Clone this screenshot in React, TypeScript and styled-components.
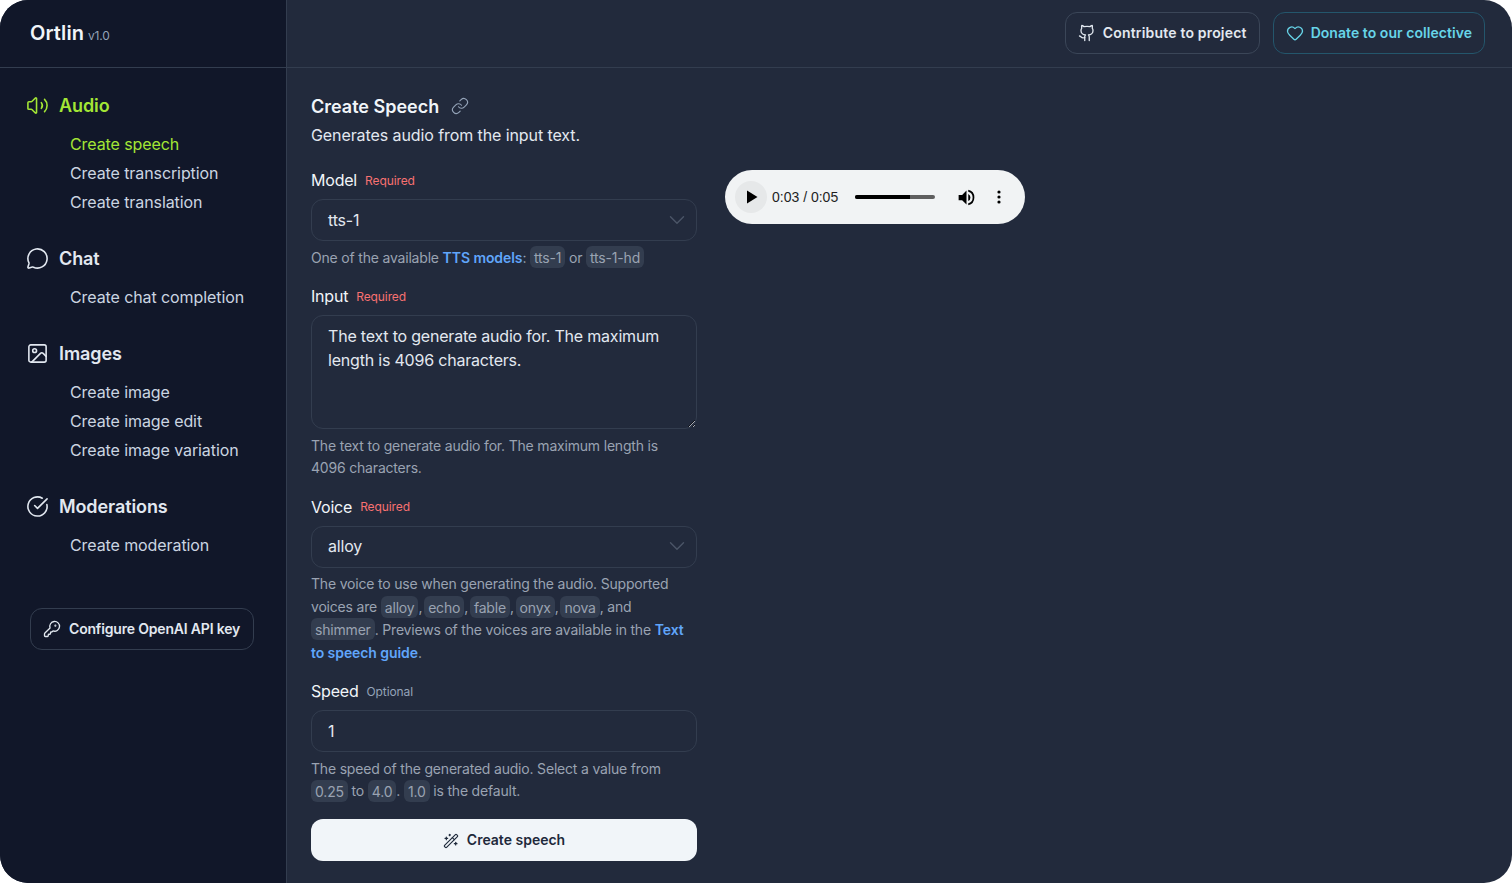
import { FC, ReactNode } from 'react';
import styled, { createGlobalStyle } from 'styled-components';
import {
  ChevronDown,
  CircleCheckBig,
  Github,
  Heart,
  Image,
  KeyRound,
  Link as LinkIcon,
  MessageCircle,
  Volume2,
  WandSparkles,
} from 'lucide-react';

const sections = [
  { name: 'Audio', icon: Volume2, items: ['Create speech', 'Create transcription', 'Create translation'] },
  { name: 'Chat', icon: MessageCircle, items: ['Create chat completion'] },
  { name: 'Images', icon: Image, items: ['Create image', 'Create image edit', 'Create image variation'] },
  { name: 'Moderations', icon: CircleCheckBig, items: ['Create moderation'] },
];

const Field: FC<{ label: string; tag: string; optional?: boolean; children: ReactNode }> = ({
  label,
  tag,
  optional,
  children,
}) => (
  <FieldWrap>
    <LabelRow>
      <Label>{label}</Label>
      <Tag $optional={optional}>{tag}</Tag>
    </LabelRow>
    {children}
  </FieldWrap>
);

export default function App() {
  return (
    <>
      <GlobalStyle />
      <Shell>
        <Sidebar>
          <Brand>
            <Logo>Ortlin</Logo>
            <Version>v1.0</Version>
          </Brand>
          <Nav>
            {sections.map((section) => (
              <Section key={section.name}>
                <SectionHead $active={section.name === 'Audio'}>
                  <SectionIcon>
                    <section.icon size={25} strokeWidth={1.65} />
                  </SectionIcon>
                  {section.name}
                </SectionHead>
                <SubList>
                  {section.items.map((item) => (
                    <SubItem key={item} $active={item === 'Create speech'}>
                      {item}
                    </SubItem>
                  ))}
                </SubList>
              </Section>
            ))}
            <KeyButton>
              <KeyRound size={18} strokeWidth={1.75} />
              Configure OpenAI API key
            </KeyButton>
          </Nav>
        </Sidebar>
        <Main>
          <TopBar>
            <OutlineButton>
              <Github size={18} strokeWidth={1.75} />
              Contribute to project
            </OutlineButton>
            <OutlineButton $accent>
              <Heart size={18} strokeWidth={1.75} />
              Donate to our collective
            </OutlineButton>
          </TopBar>
          <Content>
            <Form>
              <TitleRow>
                <Title>Create Speech</Title>
                <LinkIcon size={18} strokeWidth={1.5} />
              </TitleRow>
              <Lead>Generates audio from the input text.</Lead>
              <Field label="Model" tag="Required">
                <Control>
                  tts-1
                  <Chevron>
                    <ChevronDown size={26} strokeWidth={1.3} />
                  </Chevron>
                </Control>
                <Help>
                  One of the available <A>TTS models</A>: <Code>tts-1</Code> or <Code>tts-1-hd</Code>
                </Help>
              </Field>
              <Field label="Input" tag="Required">
                <TextArea
                  readOnly
                  value="The text to generate audio for. The maximum length is 4096 characters."
                />
                <Help>
                  The text to generate audio for. The maximum length is
                  <br />
                  4096 characters.
                </Help>
              </Field>
              <Field label="Voice" tag="Required">
                <Control>
                  alloy
                  <Chevron>
                    <ChevronDown size={26} strokeWidth={1.3} />
                  </Chevron>
                </Control>
                <Help>
                  The voice to use when generating the audio. Supported voices are <Code>alloy</Code>
                  <Sep>, </Sep>
                  <Code>echo</Code>
                  <Sep>, </Sep>
                  <Code>fable</Code>
                  <Sep>, </Sep>
                  <Code>onyx</Code>
                  <Sep>, </Sep>
                  <Code>nova</Code>, and <Code>shimmer</Code>. Previews of the voices are available in
                  the <A>Text to speech guide</A>.
                </Help>
              </Field>
              <Field label="Speed" tag="Optional" optional>
                <Control>1</Control>
                <Help>
                  The speed of the generated audio. Select a value from <Code>0.25</Code> to{' '}
                  <Code>4.0</Code>. <Code>1.0</Code> is the default.
                </Help>
              </Field>
              <Submit>
                <WandSparkles size={16} strokeWidth={1.75} />
                Create speech
              </Submit>
            </Form>
            <Player>
              <PlayCircle>
                <svg width="12" height="14" viewBox="0 0 12 14">
                  <path d="M1 0.5v13l10.5-6.5z" fill="#000" />
                </svg>
              </PlayCircle>
              <Time>0:03 / 0:05</Time>
              <Track>
                <TrackFill style={{ width: `${(55 / 80) * 100}%` }} />
              </Track>
              <PlayerIcon>
                <svg width="21" height="21" viewBox="0 0 24 24" fill="#000">
                  <path d="M3 9v6h4l5 5V4L7 9H3zm13.5 3A4.5 4.5 0 0 0 14 7.97v8.05A4.47 4.47 0 0 0 16.5 12zM14 3.23v2.06a7 7 0 0 1 0 13.42v2.06a9 9 0 0 0 0-17.54z" />
                </svg>
              </PlayerIcon>
              <PlayerDots>
                <svg width="4" height="14" viewBox="0 0 4 14" fill="#000">
                  <circle cx="2" cy="2" r="1.6" />
                  <circle cx="2" cy="7" r="1.6" />
                  <circle cx="2" cy="12" r="1.6" />
                </svg>
              </PlayerDots>
            </Player>
          </Content>
        </Main>
      </Shell>
    </>
  );
}

const GlobalStyle = createGlobalStyle`
  html, body {
    margin: 0;
    height: 100%;
    background: #fff;
    overflow: hidden;
  }
  * {
    box-sizing: border-box;
  }
`;

const Shell = styled.div`
  display: grid;
  grid-template-columns: 287px 1fr;
  width: 1512px;
  height: 883px;
  border-radius: 28px;
  overflow: hidden;
  background: #222a3c;
  font-family: Inter, 'Noto Sans', sans-serif;
  font-size: 16px;
  letter-spacing: -0.2px;
  color: #f1f5f9;
`;

const Sidebar = styled.aside`
  background: #111729;
  border-right: 1px solid #333d4f;
`;

const Brand = styled.div`
  display: flex;
  align-items: baseline;
  gap: 4px;
  height: 68px;
  padding: 20px 30px 0;
  border-bottom: 1px solid #333d4f;
`;

const Logo = styled.span`
  font-size: 20px;
  line-height: 26px;
  font-weight: 600;
  letter-spacing: 0.1px;
  color: #f1f5f9;
`;

const Version = styled.span`
  font-size: 12px;
  color: #94a3b8;
  letter-spacing: -0.2px;
`;

const Nav = styled.nav`
  display: flex;
  flex-direction: column;
  padding: 24px 0 0 26px;
`;

const Section = styled.section`
  margin-bottom: 28.5px;
`;

const SectionHead = styled.div<{ $active?: boolean }>`
  display: flex;
  align-items: center;
  gap: 10px;
  height: 28px;
  padding-bottom: 1px;
  font-size: 18px;
  font-weight: 600;
  letter-spacing: -0.1px;
  color: ${(p) => (p.$active ? '#a3e635' : '#e2e8f0')};
`;

const SectionIcon = styled.span`
  display: flex;
  width: 23px;
  justify-content: center;
`;

const SubList = styled.ul`
  list-style: none;
  margin: 9.5px 0 0;
  padding: 0 0 0 44px;
`;

const SubItem = styled.li<{ $active?: boolean }>`
  height: 29px;
  line-height: 29px;
  letter-spacing: -0.09px;
  white-space: nowrap;
  color: ${(p) => (p.$active ? '#a3e635' : '#cbd5e1')};
`;

const KeyButton = styled.button`
  display: flex;
  align-items: center;
  gap: 8px;
  width: 224px;
  height: 42px;
  margin: 20px 0 0 4px;
  padding: 0 12px 2px;
  border: 1px solid #333d4f;
  border-radius: 12px;
  background: transparent;
  color: #e2e8f0;
  font: 600 14px Inter, sans-serif;
  letter-spacing: -0.18px;
  white-space: nowrap;
  svg {
    margin-top: 2px;
  }
`;

const Main = styled.main`
  display: flex;
  flex-direction: column;
  min-width: 0;
`;

const TopBar = styled.header`
  display: flex;
  justify-content: flex-end;
  align-items: flex-start;
  gap: 13px;
  height: 68px;
  padding: 12px 27px 0 0;
  border-bottom: 1px solid #333d4f;
`;

const OutlineButton = styled.button<{ $accent?: boolean }>`
  display: flex;
  align-items: center;
  gap: 7px;
  height: 42px;
  padding: 0 12px 2px;
  border: 1px solid ${(p) => (p.$accent ? '#24566c' : '#3b4658')};
  border-radius: 12px;
  background: transparent;
  color: ${(p) => (p.$accent ? '#67d4e8' : '#e2e8f0')};
  font: 600 14px Inter, sans-serif;
  letter-spacing: ${(p) => (p.$accent ? '0.05px' : '0.18px')};
  svg {
    margin-top: 2px;
  }
`;

const Content = styled.div`
  display: flex;
  align-items: flex-start;
  gap: 28px;
  padding: 24px 0 0 24px;
`;

const Form = styled.div`
  width: 386px;
  flex: 0 0 auto;
`;

const TitleRow = styled.div`
  display: flex;
  align-items: center;
  gap: 12px;
  height: 28px;
  color: #94a3b8;
`;

const Title = styled.h1`
  margin: 0;
  font-size: 18px;
  font-weight: 600;
  letter-spacing: 0;
  color: #f1f5f9;
`;

const Lead = styled.p`
  margin: 3px 0 21px;
  line-height: 24px;
  letter-spacing: -0.09px;
  color: #e2e8f0;
`;

const FieldWrap = styled.div`
  margin-bottom: 14.75px;
`;

const LabelRow = styled.div`
  display: flex;
  align-items: center;
  gap: 8px;
  height: 24px;
  margin-bottom: 7px;
`;

const Label = styled.span`
  color: #f1f5f9;
`;

const Tag = styled.span<{ $optional?: boolean }>`
  font-size: 12px;
  letter-spacing: -0.1px;
  color: ${(p) => (p.$optional ? '#94a3b8' : '#f87171')};
`;

const Control = styled.div`
  display: flex;
  align-items: center;
  justify-content: space-between;
  height: 42px;
  padding: 0 16px 1px;
  border: 1px solid #333d4f;
  border-radius: 12px;
  color: #e2e8f0;
`;

const Chevron = styled.span`
  display: flex;
  margin-right: -10px;
  color: #4b5567;
`;

const TextArea = styled.textarea`
  display: block;
  width: 100%;
  height: 114px;
  padding: 8px 16px;
  border: 1px solid #333d4f;
  border-radius: 12px;
  background: transparent;
  color: #e2e8f0;
  font: 16px/24px Inter, sans-serif;
  letter-spacing: -0.2px;
  outline: none;
`;

const Help = styled.p`
  margin: 5.5px 0 0;
  font-size: 14px;
  line-height: 22.75px;
  letter-spacing: -0.19px;
  color: #9aa3b2;
`;

const Sep = styled.span`
  letter-spacing: -1.15px;
`;

const A = styled.a`
  font-weight: 600;
  letter-spacing: -0.08px;
  color: #60a5fa;
`;

const Code = styled.code`
  padding: 2.5px 4px;
  border-radius: 6px;
  background: #333d4f;
  font: inherit;
`;

const Submit = styled.button`
  display: flex;
  align-items: center;
  justify-content: center;
  gap: 8px;
  width: 100%;
  height: 42px;
  margin-top: 16px;
  padding-bottom: 2px;
  border: 0;
  border-radius: 12px;
  background: #f1f5f9;
  color: #1e293b;
  font: 600 14px Inter, sans-serif;
  letter-spacing: 0;
  svg {
    margin-top: 2px;
  }
`;

const Player = styled.div`
  display: flex;
  align-items: center;
  width: 300px;
  height: 54px;
  margin-top: 78px;
  padding: 0 10px;
  border-radius: 27px;
  background: #f1f3f4;
  font-family: 'Liberation Sans', Arial, sans-serif;
  letter-spacing: 0;
`;

const PlayCircle = styled.span`
  display: flex;
  align-items: center;
  justify-content: center;
  width: 32px;
  height: 32px;
  border-radius: 50%;
  background: #e6e8e9;
  padding-left: 2px;
`;

const Time = styled.span`
  width: 88px;
  padding-left: 5px;
  font-size: 14px;
  color: #1f1f1f;
  white-space: nowrap;
`;

const Track = styled.div`
  width: 80px;
  height: 4px;
  border-radius: 2px;
  background: #5f5f5f;
  overflow: hidden;
`;

const TrackFill = styled.div`
  height: 100%;
  background: #000;
`;

const PlayerIcon = styled.span`
  display: flex;
  margin-left: 21px;
`;

const PlayerDots = styled.span`
  display: flex;
  margin-left: 20px;
`;
